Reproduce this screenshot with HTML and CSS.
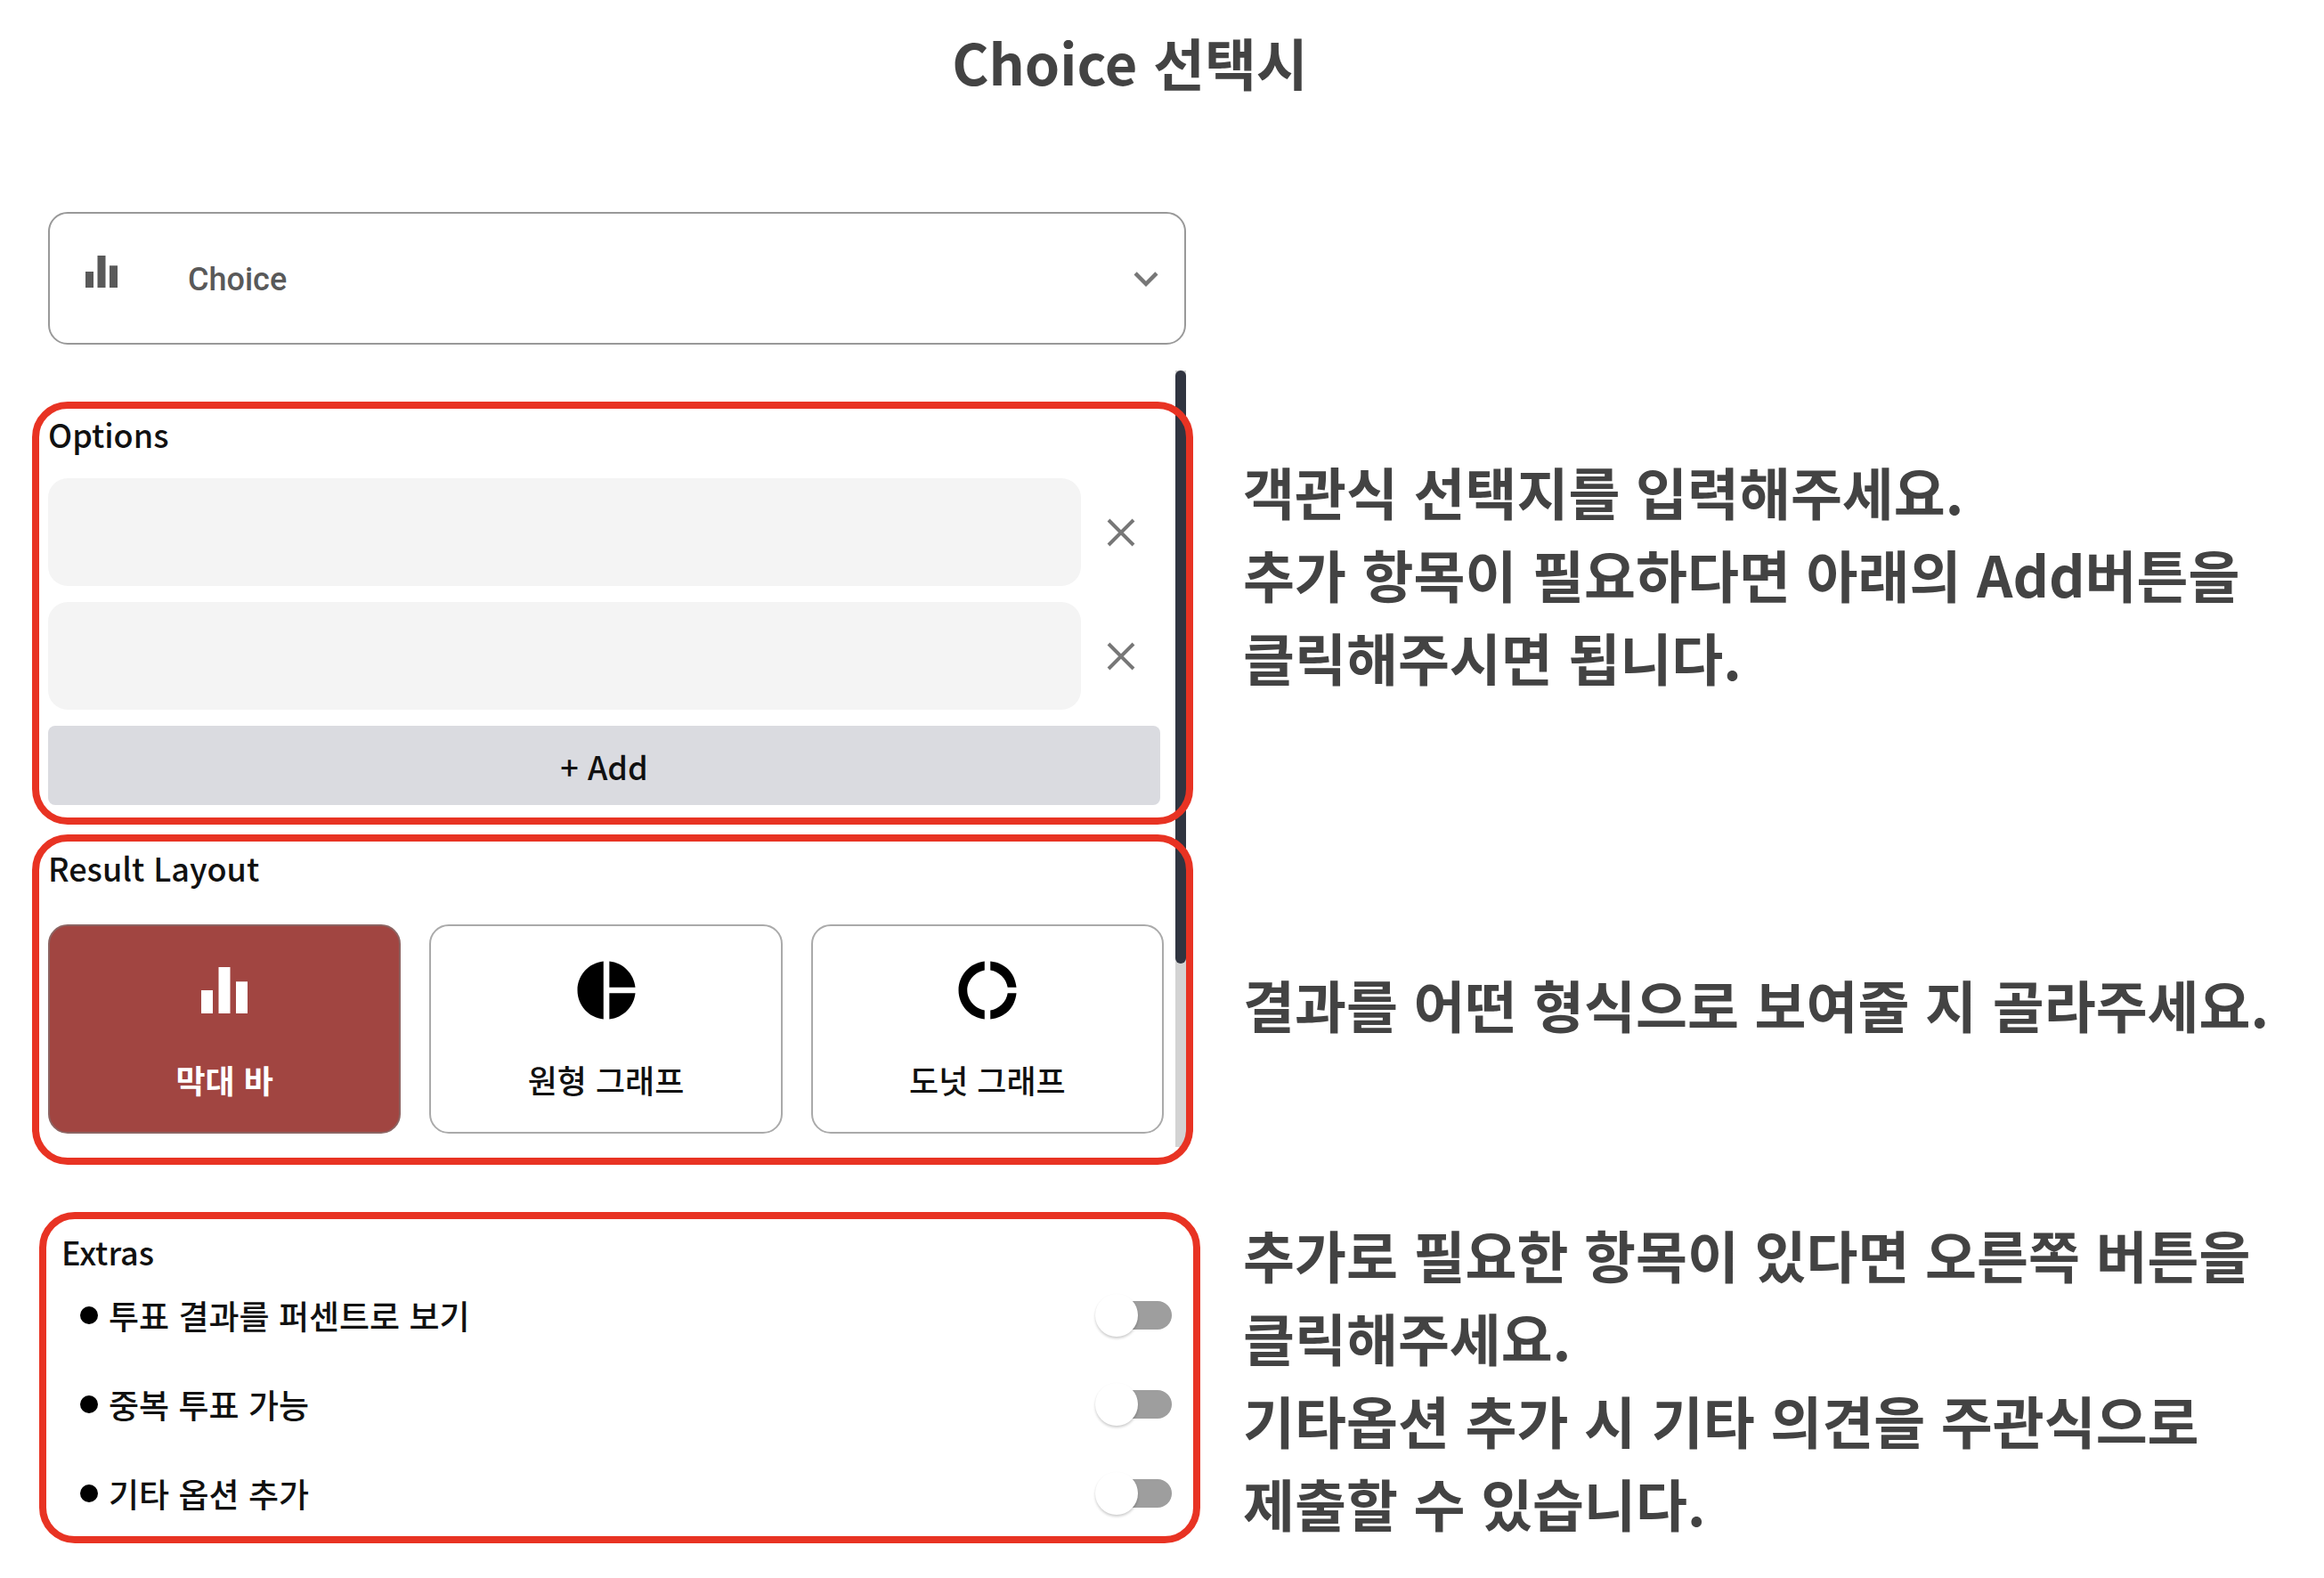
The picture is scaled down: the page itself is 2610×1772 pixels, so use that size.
FILE: index.html
```html
<!DOCTYPE html>
<html lang="ko">
<head>
<meta charset="utf-8">
<meta name="viewport" content="width=device-width, initial-scale=1">
<title>Choice 선택시</title>
<link rel="stylesheet" href="styles.css">
</head>
<body>
<main class="guide">
  <h1 class="guide-title">Choice 선택시</h1>

  <div class="type-picker">
    <svg class="type-icon" viewBox="0 0 24 24" aria-hidden="true"><path d="M10 20h4V4h-4v16zm-6 0h4v-8H4v8zM16 9v11h4V9h-4z"/></svg>
    <select class="type-select" aria-label="Type">
      <option selected>Choice</option>
    </select>
    <svg class="type-chevron" viewBox="0 0 24 24" aria-hidden="true"><path d="M16.59 8.59 12 13.17 7.41 8.59 6 10l6 6 6-6z"/></svg>
  </div>

  <div class="scrollbar" aria-hidden="true"><div class="scrollbar-thumb"></div></div>

  <section class="frame frame-options" aria-labelledby="options-heading">
    <h2 class="heading" id="options-heading">Options</h2>
    <div class="option-list">
      <div class="option-row">
        <input class="option-input" type="text" aria-label="Option 1">
        <button class="option-remove" type="button" aria-label="Remove option 1">
          <svg class="remove-icon" viewBox="0 0 32 32" aria-hidden="true"><path d="M2 2 30 30M30 2 2 30"/></svg>
        </button>
      </div>
      <div class="option-row">
        <input class="option-input" type="text" aria-label="Option 2">
        <button class="option-remove" type="button" aria-label="Remove option 2">
          <svg class="remove-icon" viewBox="0 0 32 32" aria-hidden="true"><path d="M2 2 30 30M30 2 2 30"/></svg>
        </button>
      </div>
      <button class="option-add" type="button">+ Add</button>
    </div>
  </section>
  <p class="note note-options">객관식 선택지를 입력해주세요.<br>추가 항목이 필요하다면 아래의 Add버튼을<br>클릭해주시면 됩니다.</p>

  <section class="frame frame-layout" aria-labelledby="layout-heading">
    <h2 class="heading" id="layout-heading">Result Layout</h2>
    <div class="cards">
      <label class="card">
        <input class="card-input" type="radio" name="layout" checked>
        <svg class="card-icon" viewBox="0 0 24 24" aria-hidden="true"><path d="M10 20h4V4h-4v16zm-6 0h4v-8H4v8zM16 9v11h4V9h-4z"/></svg>
        <span>막대 바</span>
      </label>
      <label class="card">
        <input class="card-input" type="radio" name="layout">
        <svg class="card-icon" viewBox="0 0 24 24" aria-hidden="true"><path d="M11 2v20c-5.07-.5-9-4.79-9-10s3.93-9.5 9-10zm2.03 0v8.99H22c-.47-4.74-4.24-8.52-8.97-8.99zm0 11.01V22c4.74-.47 8.5-4.25 8.97-8.99h-8.97z"/></svg>
        <span>원형 그래프</span>
      </label>
      <label class="card">
        <input class="card-input" type="radio" name="layout">
        <svg class="card-icon" viewBox="0 0 24 24" aria-hidden="true"><path d="M11 5.08V2c-5 .5-9 4.81-9 10s4 9.5 9 10v-3.08c-3-.48-6-3.4-6-6.92s3-6.44 6-6.92zM18.97 11H22c-.47-5-4-8.53-9-9v3.08C16 5.51 18.54 8 18.97 11zM13 18.92V22c5-.47 8.53-4 9-9h-3.03c-.43 3-2.97 5.49-5.97 5.92z"/></svg>
        <span>도넛 그래프</span>
      </label>
    </div>
  </section>
  <p class="note note-layout">결과를 어떤 형식으로 보여줄 지 골라주세요.</p>

  <section class="frame frame-extras" aria-labelledby="extras-heading">
    <h2 class="heading" id="extras-heading">Extras</h2>
    <ul class="extras">
      <li class="extra"><label class="extra-label" for="extra-percent">투표 결과를 퍼센트로 보기</label><input class="toggle" type="checkbox" id="extra-percent"></li>
      <li class="extra"><label class="extra-label" for="extra-multi">중복 투표 가능</label><input class="toggle" type="checkbox" id="extra-multi"></li>
      <li class="extra"><label class="extra-label" for="extra-other">기타 옵션 추가</label><input class="toggle" type="checkbox" id="extra-other"></li>
    </ul>
  </section>
  <p class="note note-extras">추가로 필요한 항목이 있다면 오른쪽 버튼을<br>클릭해주세요.<br>기타옵션 추가 시 기타 의견을 주관식으로<br>제출할 수 있습니다.</p>
</main>
</body>
</html>
```
FILE: styles.css
```css
* {
  box-sizing: border-box;
}

body {
  margin: 0;
  background: #fff;
  color: #111;
  font-family: "Noto Sans CJK KR", "Noto Sans", sans-serif;
  font-size: 36px;
  font-weight: 500;
  line-height: 52px;
}

h1, h2, p, ul {
  margin: 0;
  padding: 0;
}

button, input, select {
  margin: 0;
  font: inherit;
  color: inherit;
}

/* Left column holds the form, right column the explanations. */
.guide {
  display: grid;
  grid-template-columns: minmax(0, 23fr) minmax(0, 20fr);
  padding: 22px 0 36px;
}

.guide-title {
  grid-column: 1 / -1;
  padding-right: 72px;
  color: #434343;
  font-size: 63px;
  font-weight: 700;
  line-height: 93px;
  text-align: center;
}

/* Type selector */
.type-picker {
  grid-column: 1;
  display: flex;
  align-items: center;
  height: 149px;
  margin: 123px 64px 29px 54px;
  padding: 0 16px 0 31px;
  border: 2px solid #999;
  border-radius: 22px;
}

.type-icon {
  width: 54px;
  height: 54px;
  margin-bottom: 16px;
  fill: #595959;
}

.type-select {
  flex: 1;
  height: 100%;
  margin-left: 70px;
  padding: 2px 0 0;
  border: 0;
  background: none;
  appearance: none;
  color: #595959;
  font-family: Roboto, sans-serif;
}

.type-chevron {
  width: 54px;
  height: 54px;
  fill: #777;
}

/* Scrollbar runs beneath the two upper frames. */
.scrollbar {
  grid-column: 1;
  grid-row: 3 / 5;
  justify-self: end;
  width: 12px;
  margin: 0 64px 20px 0;
  background: #d3d3d3;
}

.scrollbar-thumb {
  height: 76.4%;
  border-radius: 6px;
  background: #303440;
}

/* Red frames */
.frame {
  grid-column: 1;
  position: relative;
  border: 8px solid #e83323;
  border-radius: 40px;
}

.frame-options {
  grid-row: 3;
  margin: 35px 56px 0 36px;
  padding: 2px 29px 14px 10px;
}

.frame-layout {
  grid-row: 4;
  margin: 11px 56px 0 36px;
  padding: 3px 25px 27px 10px;
}

.frame-extras {
  grid-row: 5;
  margin: 53px 48px 0 44px;
  padding: 10px 24px 21px 17px;
}

.heading {
  font-size: 36px;
  font-weight: 500;
}

/* Options */
.option-list {
  display: flex;
  flex-direction: column;
  gap: 18px;
  margin-top: 24px;
}

.option-row {
  display: flex;
}

.option-input {
  flex: 1;
  min-width: 0;
  height: 121px;
  padding: 0 24px;
  border: 0;
  border-radius: 22px;
  background: #f4f4f4;
}

.option-remove {
  display: grid;
  place-items: center;
  width: 89px;
  padding: 0;
  border: 0;
  background: none;
}

.remove-icon {
  width: 32px;
  height: 32px;
  fill: none;
  stroke: #777;
  stroke-width: 4;
}

.option-add {
  height: 89px;
  padding: 0;
  border: 0;
  border-radius: 8px;
  background: #dadbe0;
}

/* Result layout cards */
.cards {
  display: grid;
  grid-template-columns: repeat(3, 1fr);
  gap: 32px;
  margin-top: 38px;
}

.card {
  position: relative;
  display: flex;
  flex-direction: column;
  align-items: center;
  gap: 35px;
  padding: 33px 0;
  border: 2px solid #aaa;
  border-radius: 22px;
}

.card:has(:checked) {
  border-color: #8c6462;
  background: #a14541;
  color: #fff;
  font-weight: 700;
}

.card-input {
  position: absolute;
  inset: 0;
  opacity: 0;
}

.card-icon {
  width: 78px;
  height: 78px;
  fill: #000;
}

.card:has(:checked) .card-icon {
  fill: #fff;
}

/* Extras */
.extras {
  display: flex;
  flex-direction: column;
  gap: 48px;
  margin-top: 20px;
  padding-left: 21px;
  list-style: none;
}

.extra {
  display: flex;
  align-items: center;
  justify-content: space-between;
}

.extra-label {
  display: flex;
  align-items: center;
  gap: 12px;
  font-size: 37px;
}

.extra-label::before {
  content: "";
  width: 20px;
  height: 20px;
  border-radius: 50%;
  background: #000;
}

.toggle {
  display: grid;
  align-items: center;
  width: 86px;
  height: 48px;
  appearance: none;
}

.toggle::before,
.toggle::after {
  content: "";
  grid-area: 1 / 1;
}

.toggle::before {
  justify-self: end;
  width: 78px;
  height: 32px;
  border-radius: 16px;
  background: #9e9e9e;
}

.toggle::after {
  width: 48px;
  height: 48px;
  border-radius: 50%;
  background: #fff;
  box-shadow: 0 2px 3px rgba(0, 0, 0, 0.2);
}

.toggle:checked::after {
  justify-self: end;
}

/* Explanations */
.note {
  grid-column: 2;
  color: #434343;
  font-size: 63px;
  font-weight: 700;
  line-height: 93px;
}

.note-options {
  grid-row: 3;
  padding-top: 88px;
}

.note-layout {
  grid-row: 4;
  align-self: center;
  padding-top: 18px;
}

.note-extras {
  grid-row: 5;
  padding-top: 53px;
}
```
